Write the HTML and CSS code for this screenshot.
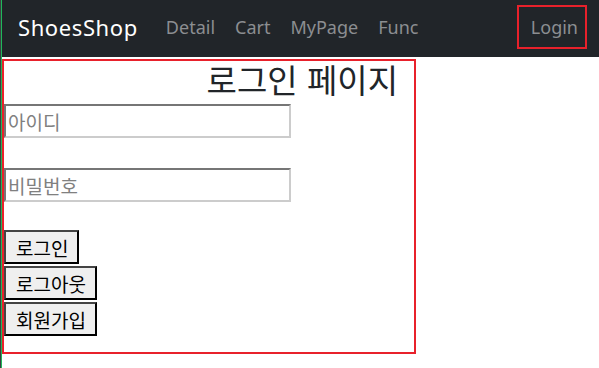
FILE: index.html
```html
<!DOCTYPE html>
<html lang="ko">
<head>
<meta charset="utf-8">
<title>ShoesShop</title>
<link rel="stylesheet" href="styles.css">
</head>
<body>
<nav class="navbar">
  <a class="brand" href="#">ShoesShop</a>
  <div class="links">
    <a class="link" href="#">Detail</a>
    <a class="link" href="#">Cart</a>
    <a class="link" href="#">MyPage</a>
    <a class="link" href="#">Func</a>
  </div>
  <a class="link login" href="#">Login</a>
</nav>
<main class="login-box">
  <h2 class="title">로그인 페이지</h2>
  <input class="field" type="text" placeholder="아이디">
  <input class="field field-pw" type="password" placeholder="비밀번호">
  <div class="buttons">
    <button class="btn">로그인</button>
    <button class="btn">로그아웃</button>
    <button class="btn">회원가입</button>
  </div>
</main>
</body>
</html>
```
FILE: styles.css
```css
html {
  border-left: 1px solid #3a3d40;
  background: #fff;
}
body {
  margin: 0;
  border-left: 1px solid #1fb85a;
  min-height: 368px;
  font-family: "Noto Sans", "Noto Sans CJK KR", sans-serif;
}
.navbar {
  height: 57px;
  background: #212529;
  display: flex;
  align-items: center;
  padding: 0 12px 4px 16px;
  box-sizing: border-box;
}
.brand {
  color: #fff;
  text-decoration: none;
  font-size: 22px;
  letter-spacing: 0.6px;
  margin-right: 28px;
}
.links {
  display: flex;
  gap: 20px;
  flex: 1;
}
.link {
  color: #8c8e91;
  text-decoration: none;
  font-size: 18px;
}
.login {
  border: 2px solid #e8212b;
  padding: 8px 7px 8px 12px;
  line-height: 24px;
}
.login-box {
  margin-top: 2px;
  width: 414px;
  height: 295px;
  box-sizing: border-box;
  border: 2px solid #e8212b;
  display: flex;
  flex-direction: column;
  align-items: flex-start;
}
.title {
  align-self: stretch;
  margin: 0;
  text-align: right;
  padding-right: 16px;
  font-family: "Noto Sans CJK KR", sans-serif;
  font-weight: 400;
  font-size: 33px;
  line-height: 36px;
  height: 43px;
  color: #212529;
}
.field {
  width: 287px;
  height: 34px;
  box-sizing: border-box;
  border: 2px solid;
  border-color: #767676 #cccccc #cccccc #767676;
  padding: 0 2px;
  font-family: "Noto Sans CJK KR", sans-serif;
  font-size: 19px;
  outline: none;
}
.field::placeholder {
  color: #808080;
}
.field-pw {
  margin-top: 30px;
}
.buttons {
  margin-top: 28px;
  display: flex;
  flex-direction: column;
  align-items: flex-start;
  gap: 2px;
}
.btn {
  height: 34px;
  box-sizing: border-box;
  background: #efefef;
  border: 2px solid;
  border-color: #444 #000 #000 #444;
  padding: 0 9px 0 10px;
  font-family: "Noto Sans CJK KR", sans-serif;
  font-size: 19px;
  color: #000;
  line-height: 1;
}
```
